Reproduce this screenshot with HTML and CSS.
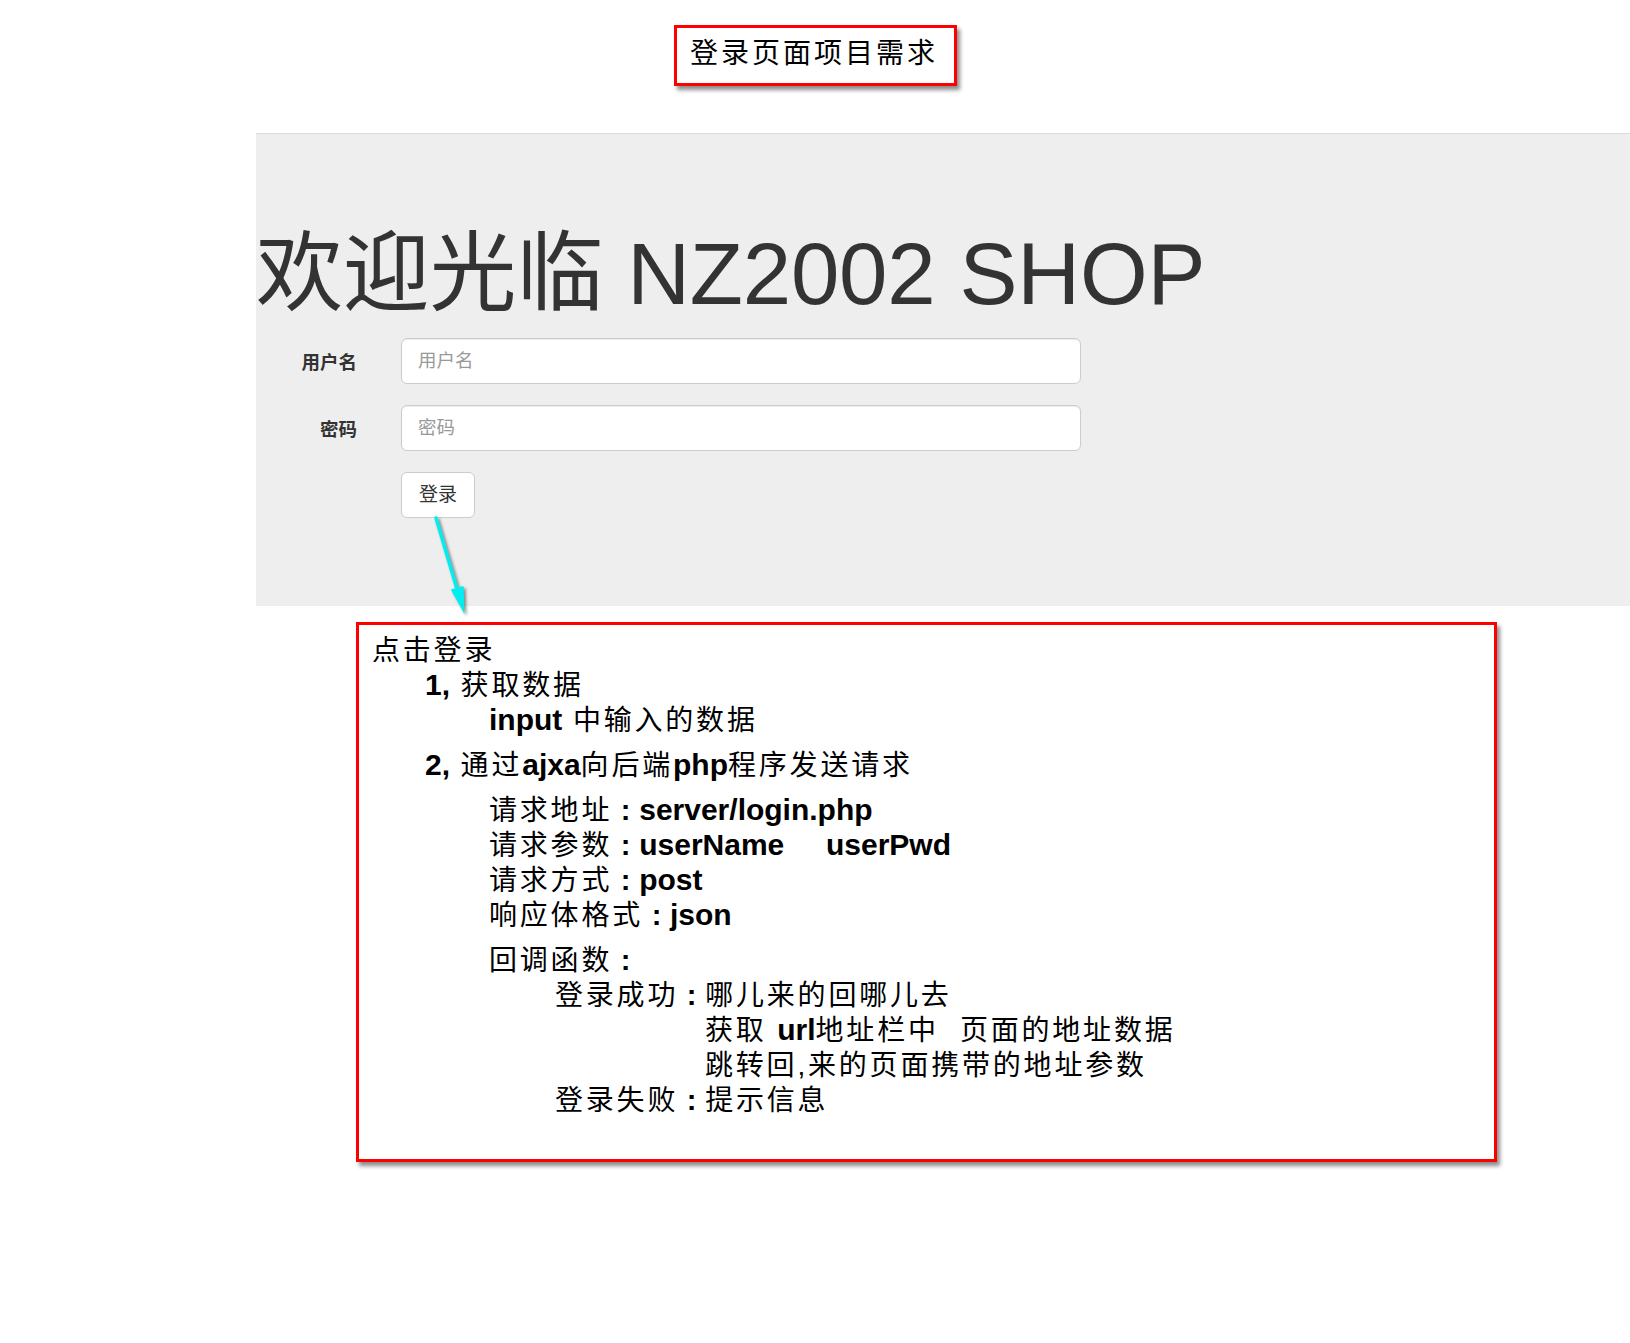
FILE: index.html
```html
<!DOCTYPE html>
<html lang="zh-CN">
<head>
<meta charset="utf-8">
<title>登录页面项目需求</title>
<link rel="stylesheet" href="styles.css">
</head>
<body>
<div class="page">
  <header class="title-wrap">
    <div class="note title">登录页面项目需求</div>
  </header>

  <section class="panel">
    <h1 class="welcome">欢迎光临 NZ2002 SHOP</h1>
    <form class="login-form">
      <label class="control-label" for="user">用户名</label>
      <input class="form-control" id="user" type="text" placeholder="用户名">
      <label class="control-label" for="pwd">密码</label>
      <input class="form-control" id="pwd" type="password" placeholder="密码">
      <span></span>
      <div><button class="btn" type="button">登录</button></div>
    </form>
  </section>

  <section class="note spec">
    <p class="l0">点击登录</p>
    <p class="l1"><b>1,</b> 获取数据</p>
    <p class="l2"><b>input</b> 中输入的数据</p>
    <p class="l1 gap"><b>2,</b> 通过<b>ajxa</b>向后端<b>php</b>程序发送请求</p>
    <p class="l2 gap2">请求地址<span class="c">:</span><b>server/login.php</b></p>
    <p class="l2">请求参数<span class="c">:</span><b>userName&nbsp;&nbsp;&nbsp;&nbsp;&nbsp;userPwd</b></p>
    <p class="l2">请求方式<span class="c">:</span><b>post</b></p>
    <p class="l2">响应体格式<span class="c">:</span><b>json</b></p>
    <p class="l2 gap">回调函数<span class="c">:</span></p>
    <p class="l3">登录成功<span class="c">:</span>哪儿来的回哪儿去</p>
    <p class="l4">获取 <b>url</b>地址栏中&nbsp;&nbsp;页面的地址数据</p>
    <p class="l4">跳转回,来的页面携带的地址参数</p>
    <p class="l3">登录失败<span class="c">:</span>提示信息</p>
  </section>

  <svg class="arrow" width="50" height="110" viewBox="0 0 50 110" aria-hidden="true">
    <line x1="11" y1="8" x2="34" y2="86" stroke="#00eef0" stroke-width="3.4" stroke-linecap="round"/>
    <polygon points="39.5,104 38.6,76 25.8,79.6" fill="#00eef0"/>
  </svg>
</div>
</body>
</html>
```

FILE: styles.css
```css
* {
  box-sizing: border-box;
}

html, body {
  margin: 0;
  padding: 0;
  background: #ffffff;
}

body {
  font-family: "Liberation Sans", "Noto Sans CJK SC", sans-serif;
  color: #000;
}

.page {
  position: relative;
  width: 1630px;
  min-height: 1343px;
  padding-top: 25px;
}

/* annotation boxes */
.note {
  border: 3px solid #ff0000;
  background: #fff;
  box-shadow: 3px 4px 4px rgba(0, 0, 0, 0.45);
}

.title-wrap {
  display: flex;
  justify-content: center;
}

.title {
  margin-left: 1px;
  height: 61px;
  padding: 0 16px 0 13px;
  font-size: 28px;
  line-height: 52px;
  letter-spacing: 3px;
  color: #000;
}

/* jumbotron panel */
.panel {
  margin: 47px 0 0 256px;
  border-top: 1px solid #dcdcdc;
  background: #eeeeee;
  padding: 96px 0 88px 0;
  color: #333;
}

.welcome {
  margin: 0 0 20px 0;
  font-size: 87px;
  line-height: 88px;
  font-weight: 400;
  color: #333;
  letter-spacing: -0.2px;
}

.login-form {
  display: grid;
  grid-template-columns: 101px 680px;
  column-gap: 44px;
  row-gap: 21px;
  align-items: center;
}

.control-label {
  text-align: right;
  font-size: 18.5px;
  font-weight: 700;
  color: #333;
}

.form-control {
  display: block;
  width: 680px;
  height: 46px;
  padding: 10px 16px;
  font-family: inherit;
  font-size: 18.5px;
  color: #555;
  background: #fff;
  border: 1px solid #ccc;
  border-radius: 6px;
  box-shadow: inset 0 1px 1px rgba(0, 0, 0, 0.075);
  outline: none;
}

.form-control::placeholder {
  color: #999;
}

.btn {
  display: block;
  height: 46px;
  padding: 10px 17px;
  font-family: inherit;
  font-size: 19px;
  line-height: 24px;
  color: #333;
  background: #fff;
  border: 1px solid #ccc;
  border-radius: 6px;
}

/* requirements box */
.spec {
  margin: 16px 0 0 356px;
  width: 1141px;
  padding: 8px 12px 40px 13px;
  font-size: 28px;
  line-height: 35.2px;
  letter-spacing: 2.8px;
}

.spec p {
  margin: 0;
  white-space: nowrap;
}

.spec b {
  font-size: 30px;
  line-height: 1;
  font-weight: 700;
  letter-spacing: 0;
}

.spec .c {
  display: inline-block;
  width: 27px;
  text-align: center;
  font-size: 29px;
  line-height: 1;
  font-weight: 700;
  letter-spacing: 0;
}

.spec .l1 { padding-left: 53px; }
.spec .l2 { padding-left: 117px; }
.spec .l3 { padding-left: 183px; }
.spec .l4 { padding-left: 333px; }

.spec .gap { margin-top: 9px; }
.spec .gap2 { margin-top: 10px; }

.arrow {
  position: absolute;
  left: 425px;
  top: 510px;
  overflow: visible;
  filter: drop-shadow(2px 2px 1.5px rgba(0, 0, 0, 0.45));
}
```
